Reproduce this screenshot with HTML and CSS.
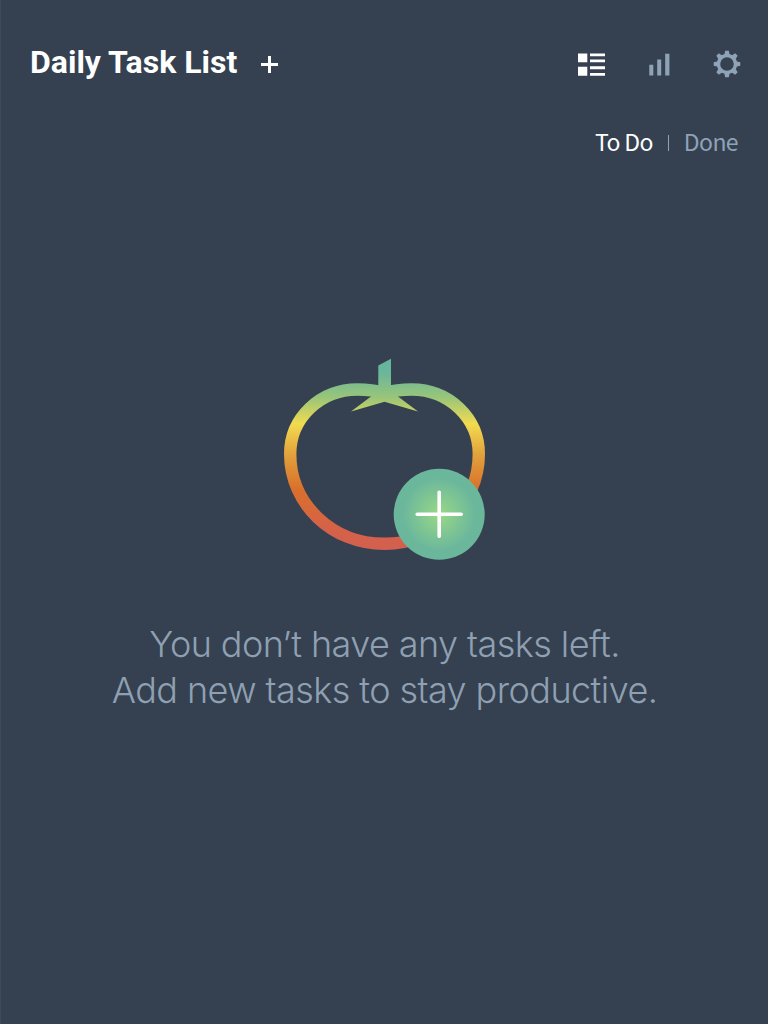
FILE: index.html
```html
<!DOCTYPE html>
<html lang="en">
<head>
<meta charset="utf-8">
<title>Daily Task List</title>
<link rel="stylesheet" href="styles.css">
</head>
<body>
<main class="app">
  <header class="header">
    <h1 class="title">Daily Task List</h1>
    <button class="add" aria-label="Add task"><svg width="18" height="18" viewBox="0 0 18 18"><path d="M0 8.5H17M8.5 0V17" stroke="#fff" stroke-width="3"/></svg></button>
    <nav class="nav">
      <svg width="27" height="24" viewBox="0 0 27 24" fill="#fff"><path d="M0 .4h9.3V9.3H0zM0 13.8h9.3v9H0zM12 .4h15v2.9H12zM12 6.4h15v2.9H12zM12 13.3h15v2.9H12zM12 19.9h15v2.9H12z"/></svg>
      <svg width="21" height="24" viewBox="0 0 21 24" fill="#8fa3b8"><path d="M.3 11.8h4V22.4h-4zM8.2 6.4h4V22.4h-4zM16.2.8h4.2V22.4h-4.2z"/></svg>
      <svg width="28" height="28" viewBox="-14 -14 28 28" fill="none" stroke="#8fa3b8"><circle r="8.5" stroke-width="3.4"/><g fill="#8fa3b8" stroke="none"><path id="tooth" d="M-2.7-9L-1.8-13.3H1.8L2.7-9z"/><use href="#tooth" transform="rotate(45)"/><use href="#tooth" transform="rotate(90)"/><use href="#tooth" transform="rotate(135)"/><use href="#tooth" transform="rotate(180)"/><use href="#tooth" transform="rotate(225)"/><use href="#tooth" transform="rotate(270)"/><use href="#tooth" transform="rotate(315)"/></g></svg>
    </nav>
  </header>
  <div class="tabs"><span class="tab active">To Do</span><span class="divider"></span><span class="tab">Done</span></div>
  <section class="empty">
    <svg class="tomato" width="202" height="202" viewBox="283 358 202 202">
      <defs>
        <linearGradient id="skin" gradientUnits="userSpaceOnUse" x1="0" y1="359" x2="0" y2="550">
          <stop offset="0" stop-color="#64b69e"/><stop offset=".07" stop-color="#69b69b"/><stop offset=".2" stop-color="#98c57a"/><stop offset=".34" stop-color="#f2db50"/><stop offset=".5" stop-color="#e2a23c"/><stop offset=".68" stop-color="#d9702c"/><stop offset=".9" stop-color="#d56149"/><stop offset="1" stop-color="#d2604f"/>
        </linearGradient>
        <radialGradient id="badge"><stop offset="0" stop-color="#99d886"/><stop offset=".8" stop-color="#6bb79c"/><stop offset="1" stop-color="#6bb79c"/></radialGradient>
      </defs>
      <path d="M384.5 393C376 390.6 366 389.5 357.5 389.5C320 389.5 290.2 418 290.2 454C290.2 504 332 543.8 384.5 543.8S478.8 504 478.8 454C478.8 418 449 389.5 411.5 389.5C403 389.5 393 390.6 384.5 393" fill="none" stroke="url(#skin)" stroke-width="12.4"/>
      <path d="M378.3 365.5L391 358.8V386.5L398 396.5L418 411.5L384.5 401.7L351 411.5L371 396.5L378.3 386.5z" fill="url(#skin)"/>
      <circle cx="439.2" cy="514.3" r="45.5" fill="url(#badge)"/>
      <path d="M417.2 514.3H461.2M439.2 492.3V536.3" stroke="#fff" stroke-width="3.6" stroke-linecap="round"/>
    </svg>
    <p class="message">You don’t have any tasks left.<br>Add new tasks to stay productive.</p>
  </section>
</main>
</body>
</html>
```
FILE: styles.css
```css
body { margin: 0; background: #354150; }
.app { box-sizing: border-box; height: 1024px; border-left: 1px solid #3d4958; overflow: hidden; }
.header { display: flex; height: 50px; padding: 40px 27px 0 29px; }
.title { margin: 0; font: 700 32px/44px Roboto, sans-serif; color: #fff; white-space: nowrap; }
.add { display: flex; margin: 16px 0 0 24px; padding: 0; border: 0; background: none; align-self: flex-start; }
.nav { display: flex; align-items: flex-start; margin-left: auto; padding-top: 13px; }
.nav svg + svg { margin-left: 44px; }
.nav svg:last-child { margin: -3px 0 0 43px; }
.tabs { display: flex; justify-content: flex-end; align-items: center; height: 32px; margin-top: 37px; padding-right: 30px; font: 400 23px/32px "Noto Sans CJK SC", sans-serif; letter-spacing: -.6px; color: #8fa3b8; }
.tab { margin-top: -5px; }
.active { color: #fff; }
.divider { width: 1px; height: 16px; margin: 0 15px; background: #8fa3b8; }
.empty { display: flex; flex-direction: column; align-items: center; padding-top: 199px; }
.tomato { display: block; margin-right: 1px; }
.message { margin: 61px 0 0; text-align: center; font: 300 36px/46px Inter, sans-serif; letter-spacing: -.56px; color: #8fa0b3; white-space: nowrap; }
```
